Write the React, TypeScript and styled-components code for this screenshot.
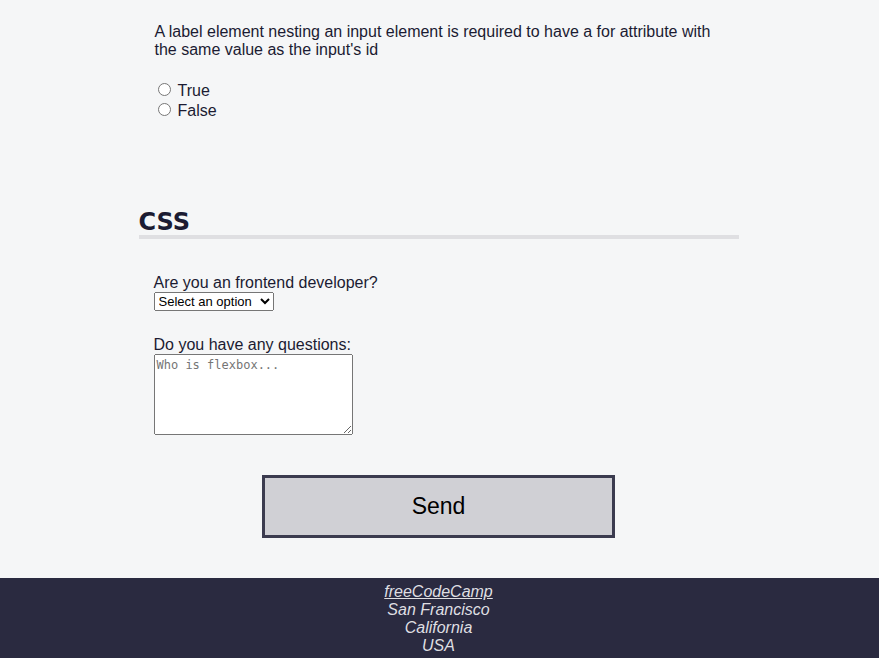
import React from "react";
import styled, { createGlobalStyle } from "styled-components";

const GlobalStyle = createGlobalStyle`
  *, *::before, *::after { box-sizing: border-box; }
  body {
    margin: 0;
    background: #f5f6f7;
    color: #1b1b32;
    font-family: "Liberation Sans", Arial, sans-serif;
    font-size: 16px;
    line-height: 18px;
  }
`;

const Main = styled.main`
  padding: 23px 2px 0 0;
`;

const Section = styled.section`
  width: 600px;
  max-width: 100%;
  margin: 0 auto;
`;

const QuestionBlock = styled.fieldset`
  border: 0;
  margin: 0;
  padding: 0 16px;
`;

const Legend = styled.legend`
  padding: 0;
  margin-bottom: 22px;
`;

const Option = styled.label`
  display: flex;
  align-items: center;
  gap: 7px;
  height: 20px;
`;

const Radio = styled.input`
  width: 13px;
  height: 13px;
  margin: 0 0 3px 3px;
`;

const Heading = styled.h2`
  margin: 83px 0 35px;
  padding-top: 5px;
  border-bottom: 4px solid #dfdfe2;
  font-family: "DejaVu Sans", Verdana, sans-serif;
  font-size: 24px;
  line-height: 26px;
  font-weight: 700;
`;

const Field = styled.div`
  display: flex;
  flex-direction: column;
  align-items: flex-start;
  padding: 0 15px;
  margin-bottom: 25px;
`;

const Select = styled.select`
  width: 120px;
  height: 19px;
  font-family: "Liberation Sans", Arial, sans-serif;
  font-size: 13px;
`;

const TextArea = styled.textarea`
  width: 199px;
  height: 81px;
  padding: 3px 2px 2px;
  font-family: "DejaVu Sans Mono", monospace;
  font-size: 12px;
`;

const SendButton = styled.button`
  display: block;
  width: 353px;
  max-width: 100%;
  height: 63px;
  margin: 40px auto;
  border: 3px solid #3b3b4f;
  background: #d0d0d5;
  color: #000;
  font-family: "Liberation Sans", Arial, sans-serif;
  font-size: 23px;
`;

const Footer = styled.footer`
  padding: 5px 2px 3px 0;
  background: #2a2a40;
  color: #dfdfe2;
  text-align: center;
`;

const Link = styled.a`
  color: inherit;
`;

export default function App() {
  return (
    <>
      <GlobalStyle />
      <Main>
        <form>
          <Section>
            <QuestionBlock>
              <Legend>
                A label element nesting an input element is required to have a for attribute with the same value as the input's id
              </Legend>
              <Option><Radio type="radio" name="nesting" value="true" />True</Option>
              <Option><Radio type="radio" name="nesting" value="false" />False</Option>
            </QuestionBlock>
          </Section>
          <Section>
            <Heading>CSS</Heading>
            <Field>
              <label htmlFor="developer">Are you an frontend developer?</label>
              <Select id="developer" defaultValue="">
                <option value="">Select an option</option>
                <option value="yes">Yes</option>
                <option value="no">No</option>
              </Select>
            </Field>
            <Field>
              <label htmlFor="questions">Do you have any questions:</label>
              <TextArea id="questions" placeholder="Who is flexbox..." />
            </Field>
          </Section>
          <SendButton type="button">Send</SendButton>
        </form>
      </Main>
      <Footer>
        <address>
          <Link href="#">freeCodeCamp</Link><br />
          San Francisco<br />
          California<br />
          USA
        </address>
      </Footer>
    </>
  );
}
